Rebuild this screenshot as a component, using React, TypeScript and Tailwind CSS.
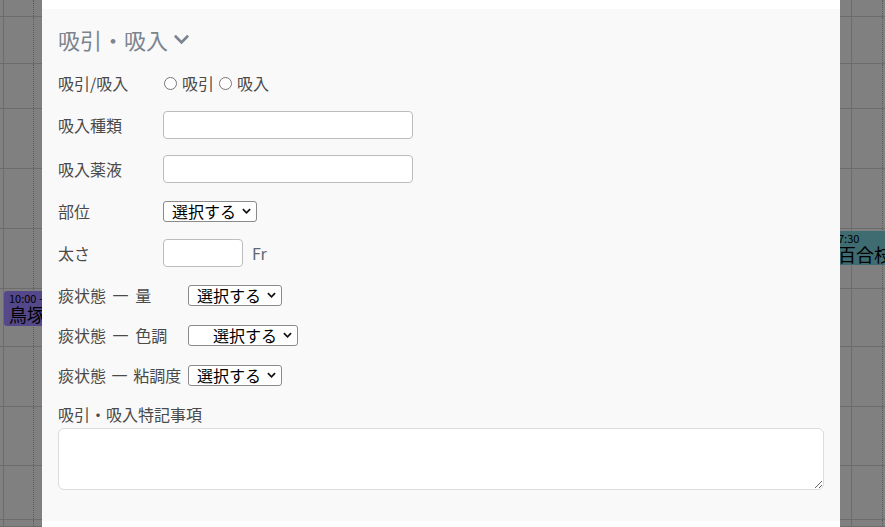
import React from 'react';

const ROW_HEIGHTS = [17, 47, 45, 60, 60, 60, 58, 60, 59, 54, 7];

const ChevronDown: React.FC = () => (
  <svg viewBox="0 0 448 512" className="w-[15px] h-[17px] fill-[#7b8590] ml-[6px] mt-[1px]">
    <path d="M207.029 381.476L12.686 187.132c-9.373-9.373-9.373-24.569 0-33.941l22.667-22.667c9.357-9.357 24.522-9.375 33.901-.04L224 284.505l154.745-154.021c9.379-9.335 24.544-9.317 33.901.04l22.667 22.667c9.373 9.373 9.373 24.569 0 33.941L240.971 381.476c-9.373 9.372-24.569 9.372-33.942 0z" />
  </svg>
);

// drawn like the browser's native dropdown
const Select: React.FC<{ width: string; padded?: boolean }> = ({ width, padded }) => (
  <button
    type="button"
    className={`${width} h-[21px] flex items-center justify-between border border-[#8a8a8a] rounded-[3px] bg-white text-black text-[16px] leading-none pr-[5px] ${padded ? 'pl-[24px]' : 'pl-[8px]'}`}
  >
    <span>選択する</span>
    <svg viewBox="0 0 10 6" className="w-[9px] h-[6px]">
      <path d="M1 1 L5 5 L9 1" fill="none" stroke="#111" strokeWidth="1.9" />
    </svg>
  </button>
);

export default function App() {
  return (
    <div className="relative w-[885px] h-[527px] overflow-hidden bg-[#808080] font-['Noto_Sans_CJK_JP','Noto_Sans',sans-serif]">
      {/* calendar behind the backdrop */}
      <div className="flex flex-col">
        {ROW_HEIGHTS.map((h, i) => (
          <div key={i} className="relative flex border-b border-[#6c6c6c]" style={{ height: h }}>
            <div className="w-[4px] border-r border-[#6c6c6c]" />
            <div className="w-[30px] border-r border-dotted border-[#5c5c5c]" />
            <div className="flex-1 border-r border-[#6c6c6c]" />
            <div className="w-[31px] border-r border-dotted border-[#5c5c5c]" />
            <div className="w-[2px]" />
            {i === 5 && (
              <div className="absolute left-[800px] top-[2px] w-[85px] h-[34px] overflow-hidden bg-[#3f6c70] text-black pl-[38px] leading-none">
                <div className="text-[11px] pt-[2px]">7:30</div>
                <div className="text-[18px] mt-[1px] whitespace-nowrap">百合枝</div>
              </div>
            )}
            {i === 6 && (
              <div className="absolute left-[4px] top-[2px] w-[80px] h-[35px] rounded-[3px] bg-[#54488a] text-black pl-[5px] leading-none">
                <div className="text-[11px] pt-[2px]">10:00 - </div>
                <div className="text-[18px] mt-[1px] whitespace-nowrap">鳥塚</div>
              </div>
            )}
          </div>
        ))}
      </div>

      {/* modal */}
      <div className="absolute left-[42px] top-0 w-[798px] h-[527px] bg-white pt-[9px]">
        <div className="h-[512px] bg-[#f9f9f9] px-[16px] pt-[14px] text-[16px] text-[#4a4a4a]">
          <div className="flex items-center h-[32px] text-[22px] text-[#7b8590] leading-[32px]">
            吸引・吸入
            <ChevronDown />
          </div>

          <div className="flex items-center h-[28px] mt-[14px]">
            <span className="w-[105px]">吸引/吸入</span>
            <label className="flex items-center">
              <input type="radio" name="kind" className="w-[13px] h-[13px] ml-[1px] mr-[5px]" />
              吸引
            </label>
            <label className="flex items-center ml-[5px]">
              <input type="radio" name="kind" className="w-[13px] h-[13px] mr-[5px]" />
              吸入
            </label>
          </div>

          <div className="flex items-center h-[28px] mt-[14px]">
            <span className="w-[105px]">吸入種類</span>
            <input type="text" className="w-[250px] h-[28px] border border-[#bdbdbd] rounded-[4px] bg-white" />
          </div>

          <div className="flex items-center h-[28px] mt-[16px]">
            <span className="w-[105px]">吸入薬液</span>
            <input type="text" className="w-[250px] h-[28px] border border-[#bdbdbd] rounded-[4px] bg-white" />
          </div>

          <div className="flex items-center h-[28px] mt-[14px]">
            <span className="w-[105px]">部位</span>
            <Select width="w-[94px]" />
          </div>

          <div className="flex items-center h-[28px] mt-[14px]">
            <span className="w-[105px]">太さ</span>
            <input type="text" className="w-[80px] h-[28px] border border-[#bdbdbd] rounded-[4px] bg-white" />
            <span className="ml-[9px] text-[#5f6770]">Fr</span>
          </div>

          <div className="flex items-center h-[28px] mt-[14px]">
            <span className="w-[130px] [word-spacing:3px]">痰状態 一 量</span>
            <Select width="w-[94px]" />
          </div>

          <div className="flex items-center h-[28px] mt-[12px]">
            <span className="w-[130px] [word-spacing:3px]">痰状態 一 色調</span>
            <Select width="w-[110px]" padded />
          </div>

          <div className="flex items-center h-[28px] mt-[12px]">
            <span className="w-[130px] whitespace-nowrap [word-spacing:2px]">痰状態 一 粘調度</span>
            <Select width="w-[94px]" />
          </div>

          <div className="mt-[13px] leading-[24px]">吸引・吸入特記事項</div>
          <textarea className="block w-[766px] h-[62px] mt-[2px] border border-[#dcdcdc] rounded-[6px] bg-white" />
        </div>
      </div>
    </div>
  );
}
